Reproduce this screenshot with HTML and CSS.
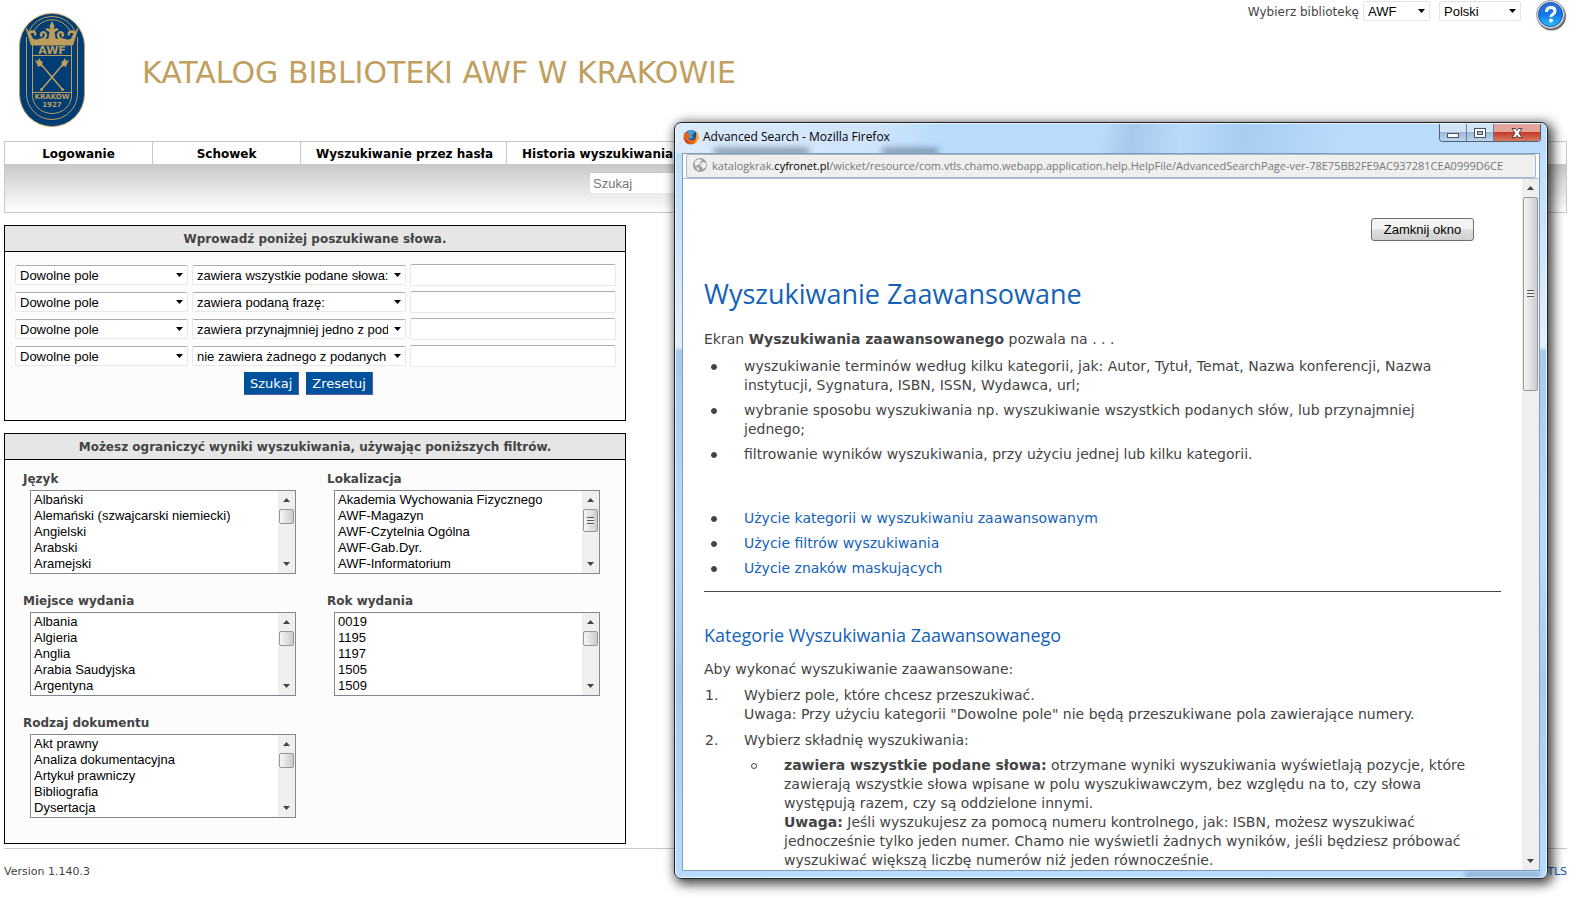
FILE: index.html
```html
<!DOCTYPE html>
<html lang="pl">
<head>
<meta charset="utf-8">
<title>Katalog Biblioteki AWF w Krakowie</title>
<link rel="stylesheet" href="styles.css">
</head>
<body>
<div class="page">
  <header class="header">
    <svg class="logo" viewBox="0 0 66 114" role="img" aria-label="AWF Kraków 1927">
      <rect x=".5" y=".5" width="65" height="113" rx="32.5" fill="#003d74" stroke="#bd9c5c"/>
      <path d="M7.500 24V80.500a25.500 26 0 0 0 51 0V24M9.500 19a25.500 25.500 0 0 1 47 0" fill="none" stroke="#bd9c5c"/>
      <path d="M13.500 31v51.500a19.500 18 0 0 0 39 0V31M15 18a20 20 0 0 1 36 0" fill="none" stroke="#bd9c5c"/>
      <path d="M6.500 14L13 24V32H53V24L59.500 14L56 25L54 32H12L10 25Z" fill="#bd9c5c" stroke="#bd9c5c" stroke-width=".6"/>
      <path d="M12.500 25Q16 27 20 26.500Q27 25.500 33 25.500Q39 25.500 46 26.500Q50 27 53.500 25V32H12.500Z" fill="#bd9c5c"/>
      <path d="M13 26Q8 20 13 18.500Q17 18.500 16 22.500M19 27Q27 26.500 27 22Q26 17.500 22.500 20Q21 22.500 23.500 23M53 26Q58 20 53 18.500Q49 18.500 50 22.500M47 27Q39 26.500 39 22Q40 17.500 43.500 20Q45 22.500 42.500 23" fill="none" stroke="#bd9c5c" stroke-width="2.400"/>
      <path d="M33 8l2.500 5l-1 3l4-1l1 2l-4 2l1.500 8h-8l1.500-8l-4-2l1-2l4 1l-1-3z" fill="#bd9c5c"/>
      <path d="M14 42.500h38M14 79.500h38" stroke="#bd9c5c"/>
      <path d="M21 50l22 26M45 50L23 76" stroke="#bd9c5c" stroke-width="1.600"/>
      <path d="M16 47l3 1l1-3l2 3l2 1l-1 2l1 3l-3-1l-2 1l-1-3zM50 47l-3 1l-1-3l-2 3l-2 1l1 2l-1 3l3-1l2 1l1-3z" fill="#bd9c5c"/>
      <circle cx="22.500" cy="76.500" r="1.500" fill="#bd9c5c"/><circle cx="43.500" cy="76.500" r="1.500" fill="#bd9c5c"/>
      <text x="33" y="40.500" text-anchor="middle" class="logo-name">AWF</text>
      <text x="33" y="86" text-anchor="middle" class="logo-city">KRAKÓW</text>
      <text x="33" y="94" text-anchor="middle" class="logo-city">1927</text>
    </svg>
    <h1 class="title">KATALOG BIBLIOTEKI AWF W KRAKOWIE</h1>
    <div class="tools">
      <label for="lib">Wybierz bibliotekę</label>
      <select id="lib" class="field lib"><option>AWF</option></select>
      <select class="field lang" aria-label="Język interfejsu"><option>Polski</option></select>
      <button class="help" aria-label="Pomoc">
        <svg viewBox="0 0 32 32">
          <defs><linearGradient id="hb" x2="0" y2="1"><stop offset="0" stop-color="#2f6fd8"/><stop offset=".5" stop-color="#1277e8"/><stop offset="1" stop-color="#2cc0ff"/></linearGradient></defs>
          <circle cx="16.500" cy="16" r="14.500" fill="#444" opacity=".8"/>
          <circle cx="15.500" cy="14.500" r="14" fill="#e0e0e0" stroke="#999"/>
          <circle cx="15.500" cy="14.500" r="12" fill="url(#hb)" stroke="#1452b0"/>
          <path d="M11.500 12q0-4.500 4.500-4.500q4 0 4 3.500q0 2-2.500 3.500q-1.500 1-1.500 2.500" fill="none" stroke="#fff" stroke-width="3"/>
          <circle cx="16" cy="20.500" r="2" fill="#fff"/>
        </svg>
      </button>
    </div>
  </header>

  <nav class="nav">
    <a href="#">Logowanie</a><a href="#">Schowek</a><a href="#" class="wide">Wyszukiwanie przez hasła</a><a href="#" class="wide">Historia wyszukiwania</a>
  </nav>
  <div class="band"><input class="field quick" type="text" placeholder="Szukaj" aria-label="Szukaj"></div>

  <main class="main">
    <form class="panel">
      <h2>Wprowadź poniżej poszukiwane słowa.</h2>
      <div class="criteria">
        <div class="row"><select class="field" aria-label="Pole 1"><option>Dowolne pole</option></select><select class="field" aria-label="Warunek 1"><option>zawiera wszystkie podane słowa:</option></select><input class="field" type="text" aria-label="Słowa 1"></div>
        <div class="row"><select class="field" aria-label="Pole 2"><option>Dowolne pole</option></select><select class="field" aria-label="Warunek 2"><option>zawiera podaną frazę:</option></select><input class="field" type="text" aria-label="Słowa 2"></div>
        <div class="row"><select class="field" aria-label="Pole 3"><option>Dowolne pole</option></select><select class="field" aria-label="Warunek 3"><option>zawiera przynajmniej jedno z podanych słów:</option></select><input class="field" type="text" aria-label="Słowa 3"></div>
        <div class="row"><select class="field" aria-label="Pole 4"><option>Dowolne pole</option></select><select class="field" aria-label="Warunek 4"><option>nie zawiera żadnego z podanych słów:</option></select><input class="field" type="text" aria-label="Słowa 4"></div>
      </div>
      <div class="actions"><button type="button">Szukaj</button><button type="reset">Zresetuj</button></div>
    </form>

    <section class="panel">
      <h2>Możesz ograniczyć wyniki wyszukiwania, używając poniższych filtrów.</h2>
      <div class="filters">
        <div class="filter"><label for="f1">Język</label>
          <div class="listbox"><select id="f1" size="5" multiple><option>Albański</option><option>Alemański (szwajcarski niemiecki)</option><option>Angielski</option><option>Arabski</option><option>Aramejski</option></select><div class="scroll"><i class="up"></i><i class="thumb"></i><i class="down"></i></div></div></div>
        <div class="filter"><label for="f2">Lokalizacja</label>
          <div class="listbox"><select id="f2" size="5" multiple><option>Akademia Wychowania Fizycznego</option><option>AWF-Magazyn</option><option>AWF-Czytelnia Ogólna</option><option>AWF-Gab.Dyr.</option><option>AWF-Informatorium</option></select><div class="scroll"><i class="up"></i><i class="thumb grip"></i><i class="down"></i></div></div></div>
        <div class="filter"><label for="f3">Miejsce wydania</label>
          <div class="listbox"><select id="f3" size="5" multiple><option>Albania</option><option>Algieria</option><option>Anglia</option><option>Arabia Saudyjska</option><option>Argentyna</option></select><div class="scroll"><i class="up"></i><i class="thumb"></i><i class="down"></i></div></div></div>
        <div class="filter"><label for="f4">Rok wydania</label>
          <div class="listbox"><select id="f4" size="5" multiple><option>0019</option><option>1195</option><option>1197</option><option>1505</option><option>1509</option></select><div class="scroll"><i class="up"></i><i class="thumb"></i><i class="down"></i></div></div></div>
        <div class="filter"><label for="f5">Rodzaj dokumentu</label>
          <div class="listbox"><select id="f5" size="5" multiple><option>Akt prawny</option><option>Analiza dokumentacyjna</option><option>Artykuł prawniczy</option><option>Bibliografia</option><option>Dysertacja</option></select><div class="scroll"><i class="up"></i><i class="thumb"></i><i class="down"></i></div></div></div>
      </div>
    </section>
  </main>
  <footer class="footer"><span>Version 1.140.3</span><a href="#">VTLS</a></footer>
</div>

<div class="window" role="dialog" aria-label="Advanced Search">
  <div class="titlebar">
    <svg class="fox" viewBox="0 0 16 16">
      <circle cx="8" cy="8" r="7" fill="#1b4f9c"/>
      <path d="M4 3q4-4 8 0l-3 3l1 3l-4 1z" fill="#3fa2dd"/>
      <path d="M2 3q-2 3-1.500 6.500q1.500 6 7.500 6q6-.5 7.500-6q.5-4-2.500-7q1 4-.5 6.500q-2 3-5 2q-2-.5-2.500-2l2-1l1-1.500l-3-1q0-1 1-2.500q-2 0-3 1q-1 0-1-1z" fill="#e4631b"/>
      <path d="M13 2.500q3.500 3.500 2.500 7.500q-1.500 4-5 5q4-3 2.500-12.500z" fill="#f9b52b"/>
      <path d="M1 7q1 6 7 7q-6 2-7-7z" fill="#b72a14"/>
    </svg>
    <span class="caption">Advanced Search - Mozilla Firefox</span>
    <div class="controls">
      <button aria-label="Minimalizuj"><svg viewBox="0 0 14 14"><rect x="1.500" y="7.500" width="11" height="4" fill="#fff" stroke="#46556b"/></svg></button>
      <button aria-label="Maksymalizuj"><svg viewBox="0 0 14 14"><rect x="1.500" y="2.500" width="11" height="9" fill="#fff" stroke="#46556b"/><rect x="4.500" y="5.500" width="5" height="3" fill="#a9bfd8" stroke="#46556b"/></svg></button>
      <button class="close" aria-label="Zamknij"><svg viewBox="0 0 14 14"><path d="M2 2.500h3.500l1.500 2l1.500-2H12L9 7l3 4.500H8.500l-1.500-2l-1.500 2H2L5 7z" fill="#fff" stroke="#543f4b"/></svg></button>
    </div>
  </div>
  <div class="client">
    <div class="address">
      <svg class="globe" viewBox="0 0 16 16"><circle cx="8" cy="8" r="7" fill="#a2a2a2"/><path d="M3 4l4-2l3 1l-2 2l1 1l-3 2l-3 1zM10 5l4 1v4l-3 2l-1-2l-2-1zM4 10l3 1v2l-1 1z" fill="#eee"/></svg>
      <span class="url">katalogkrak.<b>cyfronet.pl</b>/wicket/resource/com.vtls.chamo.webapp.application.help.HelpFile/AdvancedSearchPage-ver-78E75BB2FE9AC937281CEA0999D6CE</span>
    </div>
    <div class="view">
      <article class="doc">
        <div class="doc-top"><button class="dismiss">Zamknij okno</button></div>
        <h2>Wyszukiwanie Zaawansowane</h2>
        <p>Ekran <b>Wyszukiwania zaawansowanego</b> pozwala na . . .</p>
        <ul>
          <li>wyszukiwanie terminów według kilku kategorii, jak: Autor, Tytuł, Temat, Nazwa konferencji, Nazwa<br>instytucji, Sygnatura, ISBN, ISSN, Wydawca, url;</li>
          <li>wybranie sposobu wyszukiwania np. wyszukiwanie wszystkich podanych słów, lub przynajmniej<br>jednego;</li>
          <li>filtrowanie wyników wyszukiwania, przy użyciu jednej lub kilku kategorii.</li>
        </ul>
        <ul class="toc">
          <li><a href="#">Użycie kategorii w wyszukiwaniu zaawansowanym</a></li>
          <li><a href="#">Użycie filtrów wyszukiwania</a></li>
          <li><a href="#">Użycie znaków maskujących</a></li>
        </ul>
        <hr>
        <h3>Kategorie Wyszukiwania Zaawansowanego</h3>
        <p>Aby wykonać wyszukiwanie zaawansowane:</p>
        <ol>
          <li>Wybierz pole, które chcesz przeszukiwać.<br>Uwaga: Przy użyciu kategorii "Dowolne pole" nie będą przeszukiwane pola zawierające numery.</li>
          <li>Wybierz składnię wyszukiwania:
            <ul>
              <li><b>zawiera wszystkie podane słowa:</b> otrzymane wyniki wyszukiwania wyświetlają pozycje, które<br>zawierają wszystkie słowa wpisane w polu wyszukiwawczym, bez względu na to, czy słowa<br>występują razem, czy są oddzielone innymi.<br><b>Uwaga:</b> Jeśli wyszukujesz za pomocą numeru kontrolnego, jak: ISBN, możesz wyszukiwać<br>jednocześnie tylko jeden numer. Chamo nie wyświetli żadnych wyników, jeśli będziesz próbować<br>wyszukiwać większą liczbę numerów niż jeden równocześnie.</li>
            </ul></li>
        </ol>
      </article>
      <div class="scroll"><i class="up"></i><i class="thumb grip long"></i><i class="down"></i></div>
    </div>
  </div>
</div>
</body>
</html>
```

FILE: styles.css
```css
* { box-sizing: border-box; }

body {
  margin: 0;
  position: relative;
  min-height: 100vh;
  background: #fff;
  color: #444;
  font-family: Verdana, "DejaVu Sans", sans-serif;
  font-size: 12px;
}

a { color: #1462b8; text-decoration: none; }
button { font: inherit; padding: 0; }

.page { padding: 0 11px 0 4px; }

/* Header */
.header {
  display: flex;
  align-items: flex-start;
  height: 141px;
}
.logo { width: 66px; height: 114px; margin: 13px 0 0 15px; }
.logo text { fill: #bd9c5c; font-family: "DejaVu Sans", Verdana, sans-serif; font-weight: bold; }
.logo .logo-name { font-size: 11px; }
.logo .logo-city { font-size: 7px; }
.title {
  margin: 54px 0 0 57px;
  color: #c1a05f;
  font-size: 30px;
  font-weight: normal;
  line-height: 38px;
  white-space: nowrap;
}
.tools { display: flex; align-items: flex-start; margin-left: auto; line-height: 24px; }
.tools label { margin-right: 4px; }

.field {
  height: 20px;
  margin: 0;
  padding: 0 4px;
  border: 1px solid #e3e9ef;
  border-top-color: #abadb3;
  border-radius: 2px;
  background: #fff;
  color: #000;
  font-family: "Liberation Sans", Arial, sans-serif;
  font-size: 13px;
}
select.field {
  appearance: none;
  padding-right: 17px;
  background: #fff url("data:image/svg+xml,%3Csvg xmlns='http://www.w3.org/2000/svg' width='7' height='4'%3E%3Cpath d='M0 0h7L3.5 4z'/%3E%3C/svg%3E") no-repeat right 4px center;
}
.tools .field { margin-top: 1px; border-color: #e3e3ea; }
.lib { width: 67px; margin-right: 9px; }
.lang { width: 82px; }
.help { width: 32px; height: 32px; margin-left: 14px; border: 0; background: none; }
.help svg { display: block; width: 32px; height: 32px; }

/* Navigation */
.nav { display: flex; border: 1px solid #c8c8c8; border-bottom: 0; }
.nav a {
  width: 148px;
  height: 22px;
  border-right: 1px solid #c8c8c8;
  color: #000;
  font-weight: bold;
  line-height: 24px;
  text-align: center;
  white-space: nowrap;
}
.nav .wide { width: 206px; padding: 0 15px; text-align: left; }
.nav .wide:last-child { border-right: 0; }
.band {
  height: 49px;
  padding: 8px 0 0 585px;
  border: 1px solid #c8c8c8;
  border-top: 0;
  background: linear-gradient(#c8c8c8, #fff);
}
.quick { display: block; width: 200px; height: 21px; padding: 1px 2px 0; border-color: #c8c8c8 #fff #fff; }
.quick::placeholder { color: #777; }

/* Panels */
.main { display: flex; flex-direction: column; gap: 12px; width: 622px; margin-top: 12px; }
.panel { border: 1px solid #000; background: #fcfcfc; }
.panel h2 {
  margin: 0;
  padding-top: 1px;
  border-bottom: 1px solid #000;
  background: #e6e6e6;
  font-size: 12px;
  line-height: 24px;
  text-align: center;
}
.criteria { display: grid; gap: 5px; padding: 12px 9px 0 10px; }
.row { display: grid; grid-template-columns: 173px 214px 1fr; gap: 4px; align-items: center; }
.row input { height: 22px; width: 100%; }
.actions { display: flex; justify-content: center; gap: 7px; padding: 5px 13px 25px 0; }
.actions button {
  height: 23px;
  padding: 0 6px;
  border: solid #5a5a9c;
  border-width: 0 1px 1px 0;
  background: #00519c;
  color: #fff;
  font-size: 13px;
}

.filters {
  display: grid;
  grid-template-columns: 304px 274px;
  row-gap: 16px;
  padding: 8px 18px 25px;
}
.filter label { display: block; font-weight: bold; line-height: 22px; height: 22px; }
.listbox { display: flex; height: 84px; margin-left: 7px; width: 266px; border: 1px solid #828790; background: #fff; }
.listbox select {
  flex: 1;
  min-width: 0;
  margin: 0;
  padding: 1px 0;
  border: 0;
  background: #fff;
  color: #000;
  font-family: "Liberation Sans", Arial, sans-serif;
  font-size: 13px;
  overflow: hidden;
  outline: 0;
}
.listbox option { height: 16px; min-height: 16px; padding: 0 3px; line-height: 16px; }

/* Scroll bars */
.scroll { display: flex; flex-direction: column; align-items: center; width: 17px; background: #efefef; }
.up, .down { width: 7px; height: 4px; background: #444; flex: none; }
.up { margin: 7px 0; clip-path: polygon(50% 0, 100% 100%, 0 100%); }
.down { margin: auto 0 7px; clip-path: polygon(0 0, 100% 0, 50% 100%); }
.thumb {
  flex: none;
  display: flex;
  align-items: center;
  justify-content: center;
  width: 15px;
  height: 15px;
  border: 1px solid #979797;
  border-radius: 2px;
  background: linear-gradient(90deg, #f6f6f6, #e3e3e5 45%, #cbcbd0);
}
.grip { height: 23px; }
.grip::after { content: ""; width: 7px; height: 8px; background: repeating-linear-gradient(#555 0 1px, #eee 1px 3px); }
.thumb.long { height: 194px; }

/* Footer */
.footer {
  display: flex;
  justify-content: space-between;
  margin-top: 4px;
  padding-top: 15px;
  border-top: 1px solid #c8c8c8;
  font-size: 11px;
  line-height: 16px;
}

/* Help window */
.window {
  position: absolute;
  top: 122px;
  bottom: 19px;
  left: 674px;
  right: 30px;
  display: flex;
  flex-direction: column;
  padding: 0 7px 7px;
  border: 1px solid #1b222c;
  border-radius: 7px;
  background: linear-gradient(#b9dcfd 0, #c9e2fb 100px, #e3effb 224px, #a8caea 228px, #b9dafb 420px, #a9c9e9 560px, #b9dcfd);
  box-shadow: inset 0 0 0 1px #ecf6ff, 3px 3px 12px 2px rgba(0, 0, 0, .75);
}
.window::after {
  content: "";
  position: absolute;
  right: 7px;
  bottom: 1px;
  width: 75px;
  height: 5px;
  background: #6f8fb5;
  filter: blur(2px);
  opacity: .6;
}
.titlebar {
  position: relative;
  display: flex;
  flex: none;
  height: 29px;
  margin: 1px -6px 0;
  padding: 0 5px;
  overflow: hidden;
  border-radius: 6px 6px 0 0;
  background: linear-gradient(100deg, #dcebfb 0, #cfe4fa 200px, #b9dcfd 260px, #b9dcfd 420px, #a6c9eb 450px, #b9dcfd 500px, #a9cdef 560px, #b9dcfd 660px);
  color: #000;
  font-family: "Segoe UI", "Open Sans", sans-serif;
  font-size: 12px;
  line-height: 25px;
}
.titlebar::before, .titlebar::after {
  content: "";
  position: absolute;
  bottom: -2px;
  left: 38px;
  width: 95px;
  height: 7px;
  background: #4c5f75;
  filter: blur(3px);
  opacity: .6;
}
.titlebar::after { left: 206px; width: 56px; }
.fox { width: 16px; height: 16px; margin: 5px 4px 0 2px; }
.controls { display: flex; height: 18px; margin-left: auto; border: 1px solid #4d6078; border-top: 0; border-radius: 0 0 4px 4px; overflow: hidden; }
.controls button { width: 27px; border: 0; border-right: 1px solid #6c7f97; background: linear-gradient(#d3e4f5 0 45%, #9db8d2 50%, #bcd6ef); }
.controls .close { width: 46px; border-right: 0; background: linear-gradient(#e4a59a 0 45%, #c33b25 50%, #d97a62); }
.controls svg { display: block; width: 14px; height: 14px; margin: 0 auto; }
.client { display: flex; flex: 1; flex-direction: column; min-height: 0; border: 1px solid #7f9db9; background: #fff; }
.address {
  display: flex;
  flex: none;
  align-items: center;
  height: 24px;
  margin: 0 3px;
  padding: 0 4px 2px 5px;
  border: 1px solid #a9b8c6;
  border-radius: 2px;
  background: #efefef;
  color: #777;
  font-family: "Segoe UI", "Open Sans", sans-serif;
  font-size: 11px;
}
.globe { flex: none; width: 16px; height: 16px; margin-right: 4px; }
.url { flex: 1; overflow: hidden; white-space: nowrap; }
.url b { color: #000; font-weight: normal; }
.view { display: flex; flex: 1; min-height: 0; border-top: 1px solid #a9c0d6; }

.doc { flex: 1; min-width: 0; overflow: hidden; padding: 39px 21px 0; font-size: 14px; line-height: 19px; white-space: nowrap; }
.doc-top { display: flex; justify-content: flex-end; padding-right: 27px; }
.dismiss {
  width: 103px;
  height: 23px;
  border: 1px solid #707070;
  border-radius: 3px;
  background: linear-gradient(#f3f3f3 0 48%, #dedede 52%, #cfcfcf);
  color: #000;
  font-family: "Liberation Sans", Arial, sans-serif;
  font-size: 13px;
}
.doc h2, .doc h3 { color: #1462b8; font-family: "Open Sans", sans-serif; font-weight: normal; }
.doc h2 { margin: 34px 0 0; font-size: 27px; line-height: 38px; }
.doc h3 { margin: 31px 0 0; font-size: 18px; line-height: 24px; }
.doc p { margin: 17px 0 8px; }
.doc h3 + p { margin: 13px 0 7px; }
.doc ul, .doc ol { margin: 0; padding-left: 40px; list-style: none; }
.doc ul > li { margin-bottom: 6px; }
.doc ol > li { margin-bottom: 7px; counter-increment: step; }
.doc ul > li::before {
  content: "";
  float: left;
  width: 4px;
  height: 4px;
  margin: 7px 0 0 -33px;
  border: 1px solid #444;
  border-radius: 3px;
  background: #444;
}
.doc ol > li::before { content: counter(step) "."; float: left; margin-left: -39px; }
.doc li ul { margin-top: 6px; }
.doc li li::before { background: none; }
.doc .toc { margin-top: 45px; }
.doc hr { margin: 13px 0 0; border: 0; border-top: 1px solid #444; }
```
